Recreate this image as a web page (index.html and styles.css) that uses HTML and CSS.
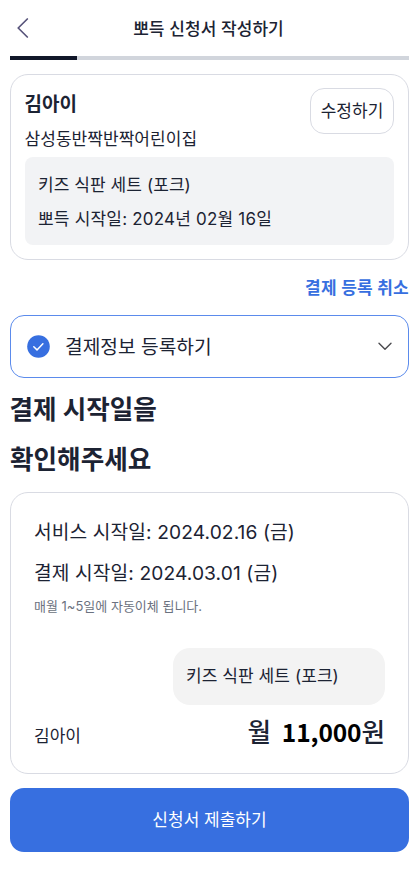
FILE: index.html
```
<!DOCTYPE html>
<html lang="ko">
<head>
<meta charset="utf-8">
<meta name="viewport" content="width=device-width, initial-scale=1">
<title>뽀득 신청서 작성하기</title>
<link rel="stylesheet" href="styles.css">
</head>

<body>
<header class="header">
  <a href="#" class="back" aria-label="뒤로">
    <svg width="12" height="20" viewBox="0 0 12 20"><path d="M10.3 1 1.2 10l9.1 9" fill="none" stroke="#57537a" stroke-width="1.7" stroke-linecap="round" stroke-linejoin="round"/></svg>
  </a>
  <h1>뽀득 신청서 작성하기</h1>
</header>
<div class="progress"><div class="progress-bar"></div></div>

<main>
  <section class="card child">
    <div class="child-top">
      <div>
        <h2>김아이</h2>
        <p>삼성동반짝반짝어린이집</p>
      </div>
      <button type="button" class="btn-edit">수정하기</button>
    </div>
    <div class="child-info">
      <p>키즈 식판 세트 (포크)</p>
      <p class="start">뽀득 시작일: 2024년 02월 16일</p>
    </div>
  </section>

  <a href="#" class="cancel">결제 등록 취소</a>

  <div class="pay-select">
    <svg class="check" width="23" height="23" viewBox="0 0 23 23"><circle cx="11.5" cy="11.5" r="11.3" fill="#376fe0"/><path d="M6.8 11.8 10 14.9 15.9 8.7" fill="none" stroke="#fff" stroke-width="1.5" stroke-linecap="round" stroke-linejoin="round"/></svg>
    <span>결제정보 등록하기</span>
    <svg class="arrow" width="14" height="9" viewBox="0 0 14 9"><path d="M1 1.2 7 7.3l6-6.1" fill="none" stroke="#4b4b4f" stroke-width="1.4" stroke-linecap="round" stroke-linejoin="round"/></svg>
  </div>

  <h2 class="title">결제 시작일을<br>확인해주세요</h2>

  <section class="card bill">
    <p class="date">서비스 시작일: 2024.02.16 (금)</p>
    <p class="date">결제 시작일: 2024.03.01 (금)</p>
    <p class="note">매월 1~5일에 자동이체 됩니다.</p>
    <div class="product">키즈 식판 세트 (포크)</div>
    <div class="total">
      <span class="name">김아이</span>
      <span class="price">월 <b>11,000</b>원</span>
    </div>
  </section>

  <button type="submit" class="btn-submit">신청서 제출하기</button>
</main>
</body>
</html>
```
FILE: styles.css
```
* {box-sizing: border-box; margin: 0; padding: 0;}
body {background: #fff; color: #1c2333; font: 17px/34px Inter, "Noto Sans CJK KR", sans-serif;}
a {text-decoration: none;}
button {font: inherit; color: inherit;}

.header {display: grid; grid-template-columns: 24px 1fr 24px; align-items: center; height: 56px; padding: 0 9px;}
.header h1 {padding-top: 1px; font-size: 17px; font-weight: 500; text-align: center; letter-spacing: .08px;}
.back {display: flex; padding-left: 8px;}

.progress {height: 4px; margin: 0 8px 0 10px; background: #d1d5dc;}
.progress-bar {width: 16.7%; height: 4px; background: #111729;}

main {display: flex; flex-direction: column; padding: 14px 8px 0 10px;}
.card {border: 1px solid #d9dbe3; border-radius: 18px;}

.child {height: 186px; padding: 13px 14px 0 13.5px;}
.child-top {display: flex; justify-content: space-between; height: 69px;}
.child-top h2 {padding-top: 1px; font-size: 19px; font-weight: 700; line-height: 32px;}
.child-top p {line-height: 36px; letter-spacing: .05px;}
.btn-edit {width: 84px; height: 46px; background: #fff; border: 1px solid #d9dbe3; border-radius: 14px;}
.child-info {height: 88px; padding: 11px 14px 0 13.5px; background: #f2f3f5; border-radius: 8px; letter-spacing: .08px;}
.start {letter-spacing: .2px;}

.cancel {align-self: flex-end; height: 55px; line-height: 56px; color: #376fe0; font-weight: 700; letter-spacing: .25px;}

.pay-select {display: flex; align-items: center; height: 63px; padding: 0 16px; border: 1px solid #5b8bec; border-radius: 14px; font-size: 19.2px;}
.pay-select span {flex: 1; padding-left: 15px;}

.title {height: 114px; padding-top: 7px; font-size: 25.6px; font-weight: 700; line-height: 50px; text-indent: -.5px;}

.bill {height: 282px; padding: 19px 23px 0;}
.date {font-size: 19.2px; line-height: 41px; letter-spacing: .1px;}
.note {font-size: 13px; line-height: 25px; color: #6b7280;}
.product {width: 212px; height: 57px; margin: 29px 0 0 auto; padding-left: 13px; line-height: 56px; background: #f3f3f3; border-radius: 17px; letter-spacing: .08px;}
.total {display: flex; justify-content: space-between; align-items: baseline; padding-top: 10px;}
.name {padding-top: 1px;}
.price {font-size: 25.6px; font-weight: 500;}
.price b {margin-left: 4px; font-family: "Noto Sans CJK KR", sans-serif; font-size: 24.5px; font-weight: 700; letter-spacing: -.1px; color: #000;}

.btn-submit {height: 64px; margin-top: 14px; background: #376fe0; border: 0; border-radius: 14px; color: #fff;}
```
